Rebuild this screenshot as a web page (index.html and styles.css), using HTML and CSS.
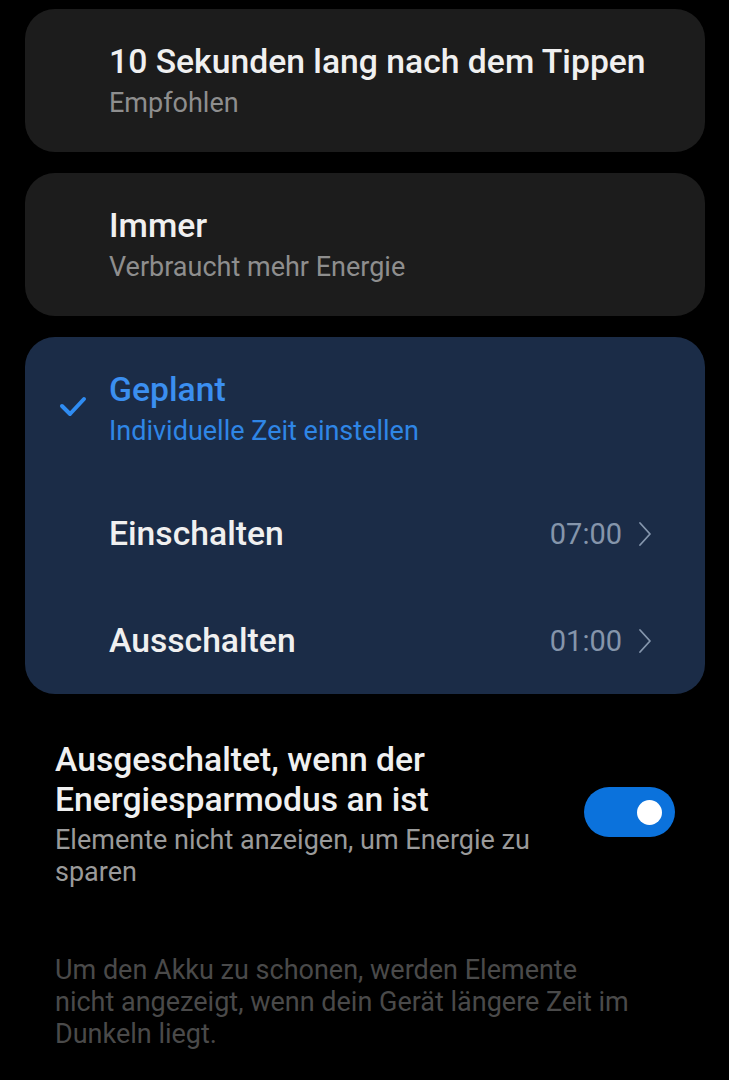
FILE: index.html
```html
<!DOCTYPE html>
<html>
    <head>
        <meta charset="utf-8">
        <title>Elemente anzeigen</title>
        <link rel="stylesheet" href="styles.css">
    </head>
    <body>
        <div class="list">
            <div class="card">
                <div class="option">
                    <div class="option-text">
                        <div class="title">10 Sekunden lang nach dem Tippen</div>
                        <div class="sub">Empfohlen</div>
                    </div>
                </div>
            </div>
            <div class="card">
                <div class="option">
                    <div class="option-text">
                        <div class="title">Immer</div>
                        <div class="sub">Verbraucht mehr Energie</div>
                    </div>
                </div>
            </div>
            <div class="card card-active">
                <div class="option">
                    <svg class="check" width="28" height="22" viewBox="0 0 28 22">
                        <polyline points="3,11 11,19 25,4" fill="none" stroke="#2f8cf2" stroke-width="4" stroke-linecap="round" stroke-linejoin="round"/>
                    </svg>
                    <div class="option-text">
                        <div class="title">Geplant</div>
                        <div class="sub">Individuelle Zeit einstellen</div>
                    </div>
                </div>
                <div class="row">
                    <span class="row-label">Einschalten</span>
                    <span class="row-value">07:00</span>
                    <svg class="chev" width="14" height="26" viewBox="0 0 14 26">
                        <polyline points="2,2 12,13 2,24" fill="none" stroke="#8596ad" stroke-width="1.8" stroke-linecap="round" stroke-linejoin="round"/>
                    </svg>
                </div>
                <div class="row">
                    <span class="row-label">Ausschalten</span>
                    <span class="row-value">01:00</span>
                    <svg class="chev" width="14" height="26" viewBox="0 0 14 26">
                        <polyline points="2,2 12,13 2,24" fill="none" stroke="#8596ad" stroke-width="1.8" stroke-linecap="round" stroke-linejoin="round"/>
                    </svg>
                </div>
            </div>
        </div>

        <div class="setting">
            <div class="setting-text">
                <div class="title">Ausgeschaltet, wenn der Energiesparmodus an ist</div>
                <div class="sub">Elemente nicht anzeigen, um Energie zu sparen</div>
            </div>
            <div class="switch"><span class="knob"></span></div>
        </div>

        <p class="note">Um den Akku zu schonen, werden Elemente nicht angezeigt, wenn dein Gerät längere Zeit im Dunkeln liegt.</p>
    </body>
</html>
```
FILE: styles.css
```css
*{
    margin:0;
    padding:0;
    box-sizing:border-box;
}
body{
    background:#000;
    width:729px;
    height:1080px;
    overflow:hidden;
    font-family:Roboto, "Noto Sans", sans-serif;
    color:#f0f0f0;
}
.list{
    display:flex;
    flex-direction:column;
    gap:21px;
    padding:9px 24px 0 25px;
}
.card{
    background:#1c1c1c;
    border-radius:30px;
}
.card-active{
    background:#1b2c47;
}
.option{
    height:143px;
    display:flex;
    align-items:center;
    position:relative;
    padding-left:84px;
}
.title{
    font-size:33.7px;
    font-weight:500;
    line-height:40px;
}
.sub{
    font-size:27px;
    line-height:32px;
    color:#8e8e8e;
    margin-top:5px;
}
.card-active .title{
    color:#3b8ff0;
}
.card-active .sub{
    color:#2f86e6;
}
.check{
    position:absolute;       /* sits in the gutter left of the text */
    left:34px;
    top:58px;
}
.row{
    height:107px;
    display:flex;
    align-items:center;
    padding:0 53px 0 84px;
}
.row-label{
    flex:1;
    font-size:33.7px;
    font-weight:500;
}
.row-value{
    font-size:29px;
    color:#8595ab;
    margin-right:16px;
}
.chev{
    display:block;
}
.setting{
    display:flex;
    align-items:center;
    padding:46px 54px 0 55px;
}
.setting-text{
    flex:1;
    padding-right:30px;
}
.setting .sub{
    color:#9a9a9a;
    margin-top:4px;
}
.switch{
    width:91px;
    height:50px;
    border-radius:25px;
    background:#0b72dc;
    display:flex;
    align-items:center;
    justify-content:flex-end;
    padding-right:13px;
    margin-top:-4px;
}
.knob{
    width:25px;
    height:25px;
    border-radius:50%;
    background:#fff;
}
.note{
    margin:66px 54px 0 55px;
    width:580px;
    font-size:27px;
    line-height:32px;
    color:#4a4a4a;
}
```
